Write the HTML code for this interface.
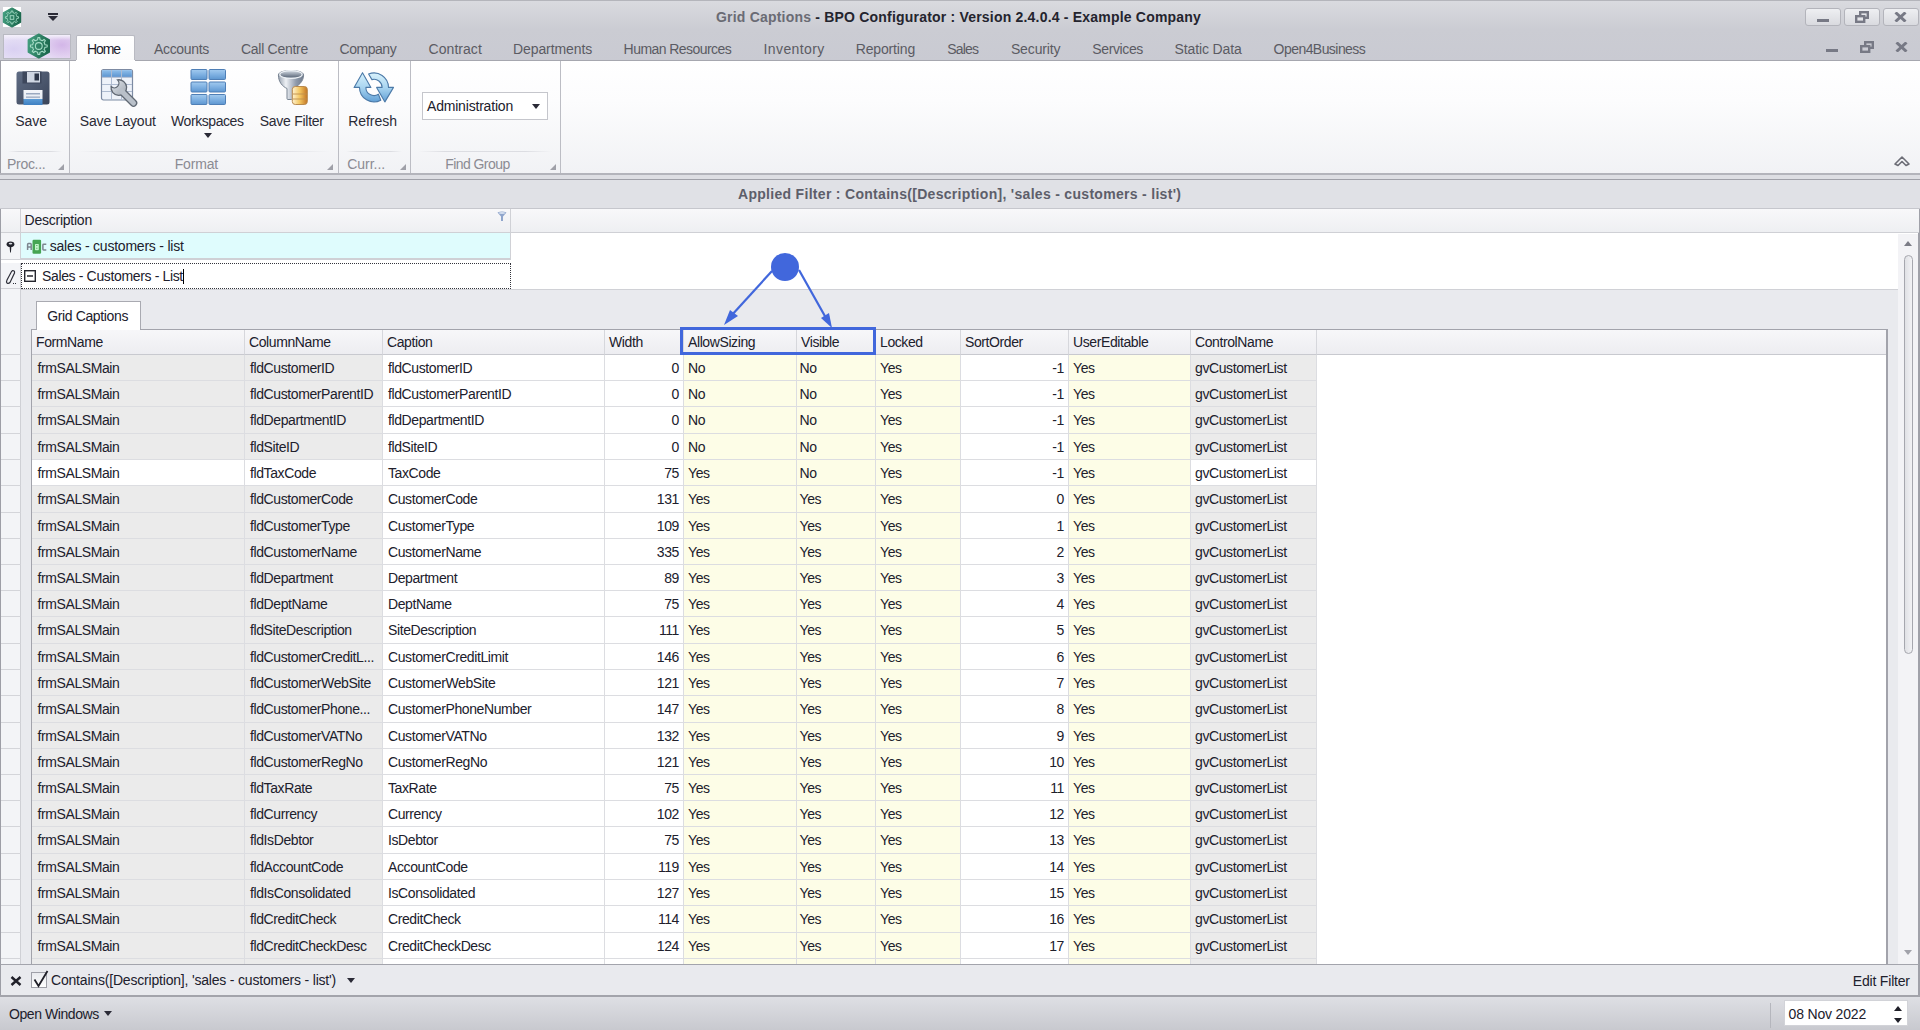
<!DOCTYPE html><html><head><meta charset="utf-8"><title>Grid Captions</title><style>
*{box-sizing:border-box;margin:0;padding:0}
html,body{width:1920px;height:1030px;overflow:hidden;background:#e9eaee;font-family:"Liberation Sans",sans-serif;font-size:13px;color:#20202c}
.a{position:absolute}
.t{position:absolute;white-space:nowrap;line-height:16px}
/* title bar */
#titlebar{position:absolute;left:0;top:0;width:1920px;height:61px;background:linear-gradient(#d9dadf 0px,#d3d4da 12px,#cbccd3 28px,#c9cad2 61px);border-top:1px solid #b4b5bb}
#tabrowline{position:absolute;left:0;top:60px;width:1920px;height:1px;background:#a6a7af}
.tab{position:absolute;top:41.5px;color:#5b5b63;white-space:nowrap;line-height:16px}
#hometab{position:absolute;left:76px;top:35px;width:59px;height:26px;background:linear-gradient(#ffffff,#fbfbfc);border:1px solid #b9bac2;border-bottom:none;border-radius:2px 2px 0 0}
/* ribbon */
#ribbon{position:absolute;left:0;top:61px;width:1920px;height:113px;background:linear-gradient(#ffffff 0px,#fcfcfd 40px,#f1f2f5 113px);border-left:1px solid #9d9ea6}
#ribbonbot{position:absolute;left:0;top:173px;width:1920px;height:2px;background:#b3b4bb}
#gap{position:absolute;left:0;top:175px;width:1920px;height:4px;background:#dddee3}
.sep{position:absolute;top:61px;width:1px;height:112px;background:#bcbdc4}
.glab{position:absolute;top:156px;color:#8b8b93;white-space:nowrap;line-height:16px}
.gline{position:absolute;top:151px;height:1px;background:linear-gradient(90deg,rgba(220,221,226,0),#dcdde2 20%,#dcdde2 80%,rgba(220,221,226,0))}
.launch{position:absolute;top:164px;width:0;height:0;border-left:6px solid transparent;border-bottom:6px solid #9fa0a8}
.rlab{position:absolute;top:114px;color:#2a2a36;white-space:nowrap;line-height:16px}
/* filter bar */
#fbar{position:absolute;left:0;top:179px;width:1920px;height:30px;background:#e0e1e6;border-top:1px solid #9fa0a8;border-bottom:1px solid #c6c7cd}
#fbar .ft{position:absolute;left:738px;top:6px;font-weight:bold;font-size:14px;color:#5d5e6a;letter-spacing:0.3px;white-space:nowrap;line-height:16px}
/* master grid */
#master{position:absolute;left:0;top:209px;width:1920px;height:756px;background:#fff;border-left:1px solid #9d9ea6;border-right:2px solid #a0a1a9}
.mh{position:absolute;top:209px;height:24px;background:linear-gradient(#f8f8fa,#eeeff2);border-bottom:1px solid #cfd0d5}
#detailbg{position:absolute;left:21px;top:290px;width:1877px;height:674px;background:#e9eaee}
/* detail grid */
#dgrid{position:absolute;left:31px;top:329px;width:1857px;height:635px;background:#fff;border:1px solid #a2a3ab;border-bottom:none;border-right:2px solid #a2a3ab}
.hc{position:absolute;top:330px;height:25px;background:linear-gradient(#f7f7f9,#ededf1);border-right:1px solid #d6d7dc;border-bottom:1px solid #c8c9cf;padding:4px 0 0 4px;white-space:nowrap;line-height:16px;color:#20202c;font-size:14px;letter-spacing:-0.4px}
.c{position:absolute;border-right:1px solid #dcdde1;border-bottom:1px solid #dcdde1;white-space:nowrap;line-height:16px;padding:5px 4px 0 4px;overflow:hidden;font-size:14px;letter-spacing:-0.4px}
.c.g{background:#ebebeb}
.c.w{background:#ffffff}
.c.y{background:#fdfde7}
.c.r{text-align:right}
.ri{position:absolute;left:1px;width:20px;background:#f3f4f7;border-bottom:1px solid #d4d5da;border-right:1px solid #cfd0d5}
#ricol{position:absolute;left:1px;top:289px;width:20px;height:675px;background:#f3f4f7;border-right:1px solid #cfd0d5}
/* filter panel + status */
#fpanel{position:absolute;left:0;top:964px;width:1920px;height:32px;background:#e9eaee;border-top:1px solid #a3a4ac;border-left:1px solid #9d9ea6;border-right:2px solid #a0a1a9}
#status{position:absolute;left:0;top:995px;width:1920px;height:35px;background:linear-gradient(#dedfe4,#c8c9cf);border-top:2px solid #a3a4ab}

</style></head><body>
<div id="titlebar"></div>
<!-- app small icon -->
<div class="a" style="left:3px;top:7px;width:18px;height:20px;background:#fff"></div>
<svg class="a" style="left:2px;top:7px" width="20" height="21" viewBox="0 0 20 21"><polygon points="10,1 18.6,5.8 18.6,15.2 10,20 1.4,15.2 1.4,5.8" fill="url(#hx)" stroke="url(#hx)" stroke-width="1.2" stroke-linejoin="round"/><path d="M14.53 8.62 L14.81 9.54 L16.56 9.78 L16.56 11.22 L14.81 11.46 L14.53 12.38 L14.07 13.22 L15.15 14.63 L14.13 15.65 L12.72 14.57 L11.88 15.03 L10.96 15.31 L10.72 17.06 L9.28 17.06 L9.04 15.31 L8.12 15.03 L7.28 14.57 L5.87 15.65 L4.85 14.63 L5.93 13.22 L5.47 12.38 L5.19 11.46 L3.44 11.22 L3.44 9.78 L5.19 9.54 L5.47 8.62 L5.93 7.78 L4.85 6.37 L5.87 5.35 L7.28 6.43 L8.12 5.97 L9.04 5.69 L9.28 3.94 L10.72 3.94 L10.96 5.69 L11.88 5.97 L12.72 6.43 L14.13 5.35 L15.15 6.37 L14.07 7.78Z" fill="none" stroke="#a6dcc6" stroke-width="0.9" stroke-linejoin="round"/><rect x="8.2" y="8.7" width="3.6" height="3.6" fill="none" stroke="#a6dcc6" stroke-width="0.9"/></svg>
<!-- quick access arrow -->
<div class="a" style="left:48px;top:13px;width:10px;height:2px;background:#2a2a36"></div>
<div class="a" style="left:48px;top:16px;width:0;height:0;border-left:5px solid transparent;border-right:5px solid transparent;border-top:5px solid #2a2a36"></div>
<!-- title -->
<div class="t" style="left:716px;top:9px;font-weight:bold;font-size:14px;letter-spacing:0.2px;color:#6a6b74">Grid Captions <span style="color:#24242e">- BPO Configurator : Version 2.4.0.4 - Example Company</span></div>
<!-- window buttons -->
<div class="a" style="left:1805px;top:8px;width:36px;height:18px;border:1px solid #b3b4bb;border-radius:3px;background:linear-gradient(#eeeff2,#d9dadf)"></div>
<div class="a" style="left:1844px;top:8px;width:36px;height:18px;border:1px solid #b3b4bb;border-radius:3px;background:linear-gradient(#eeeff2,#d9dadf)"></div>
<div class="a" style="left:1883px;top:8px;width:36px;height:18px;border:1px solid #b3b4bb;border-radius:3px;background:linear-gradient(#eeeff2,#d9dadf)"></div>
<div class="a" style="left:1817px;top:19px;width:12px;height:3px;background:#777985"></div>
<svg class="a" style="left:1855px;top:11px" width="14" height="12" viewBox="0 0 14 12"><rect x="5.2" y="1.2" width="7.6" height="5.6" fill="none" stroke="#777985" stroke-width="2.4"/><rect x="1.2" y="5.2" width="8" height="5.6" fill="#e4e5e9" stroke="#777985" stroke-width="2.4"/></svg>
<svg class="a" style="left:1894px;top:12px" width="13" height="10" viewBox="0 0 13 10"><path d="M1.5 0.5 L11.5 9.5 M11.5 0.5 L1.5 9.5" stroke="#777985" stroke-width="3"/></svg>
<!-- app button -->
<div class="a" style="left:3px;top:34px;width:68px;height:25px;border:1px solid #b9bac2;background:linear-gradient(#f4f0fb 0,rgba(244,240,251,0) 5px),radial-gradient(ellipse 22px 14px at 58px 10px,#d3b6e8,rgba(211,182,232,0)),radial-gradient(ellipse 24px 14px at 10px 14px,#d9d0f2,rgba(217,208,242,0)),linear-gradient(100deg,#e9e4f6,#e4dcf4 50%,#e6d6f2)"></div>
<svg class="a" style="left:27px;top:33px" width="24" height="26" viewBox="0 0 24 26"><defs><linearGradient id="hx" x1="0" y1="0" x2="1" y2="0.3"><stop offset="0" stop-color="#47a283"/><stop offset="1" stop-color="#1d6a4f"/></linearGradient></defs><polygon points="11.8,1.2 22.2,7 22.2,19 11.8,24.8 1.4,19 1.4,7" fill="url(#hx)" stroke="url(#hx)" stroke-width="1.6" stroke-linejoin="round"/><path d="M17.62 10.59 L17.98 11.77 L20.15 12.08 L20.15 13.92 L17.98 14.23 L17.62 15.41 L17.04 16.50 L18.36 18.25 L17.05 19.56 L15.30 18.24 L14.21 18.82 L13.03 19.18 L12.72 21.35 L10.88 21.35 L10.57 19.18 L9.39 18.82 L8.30 18.24 L6.55 19.56 L5.24 18.25 L6.56 16.50 L5.98 15.41 L5.62 14.23 L3.45 13.92 L3.45 12.08 L5.62 11.77 L5.98 10.59 L6.56 9.50 L5.24 7.75 L6.55 6.44 L8.30 7.76 L9.39 7.18 L10.57 6.82 L10.88 4.65 L12.72 4.65 L13.03 6.82 L14.21 7.18 L15.30 7.76 L17.05 6.44 L18.36 7.75 L17.04 9.50Z" fill="none" stroke="#a6dcc6" stroke-width="1.1" stroke-linejoin="round"/><circle cx="11.8" cy="13" r="3.4" fill="none" stroke="#a6dcc6" stroke-width="1.1"/></svg>
<!-- tabs -->
<div id="hometab"></div>
<div id="tabrowline"></div>
<div class="a" style="left:76px;top:60px;width:59px;height:2px;background:#fff"></div>
<div class="tab" style="left:87.00px;top:41px;font-size:14px;letter-spacing:-1.120px;color:#20202c">Home</div>
<div class="tab" style="left:154.00px;top:41px;font-size:14px;letter-spacing:-0.342px">Accounts</div>
<div class="tab" style="left:241.00px;top:41px;font-size:14px;letter-spacing:-0.283px">Call Centre</div>
<div class="tab" style="left:339.50px;top:41px;font-size:14px;letter-spacing:-0.454px">Company</div>
<div class="tab" style="left:428.60px;top:41px;font-size:14px;letter-spacing:0.040px">Contract</div>
<div class="tab" style="left:513.00px;top:41px;font-size:14px;letter-spacing:-0.096px">Departments</div>
<div class="tab" style="left:623.60px;top:41px;font-size:14px;letter-spacing:-0.553px">Human Resources</div>
<div class="tab" style="left:763.60px;top:41px;font-size:14px;letter-spacing:0.376px">Inventory</div>
<div class="tab" style="left:855.70px;top:41px;font-size:14px;letter-spacing:-0.150px">Reporting</div>
<div class="tab" style="left:947.30px;top:41px;font-size:14px;letter-spacing:-0.858px">Sales</div>
<div class="tab" style="left:1010.90px;top:41px;font-size:14px;letter-spacing:-0.125px">Security</div>
<div class="tab" style="left:1092.30px;top:41px;font-size:14px;letter-spacing:-0.384px">Services</div>
<div class="tab" style="left:1174.60px;top:41px;font-size:14px;letter-spacing:-0.128px">Static Data</div>
<div class="tab" style="left:1273.60px;top:41px;font-size:14px;letter-spacing:-0.554px">Open4Business</div>
<!-- mdi buttons -->
<div class="a" style="left:1826px;top:49px;width:12px;height:3px;background:#777985"></div>
<svg class="a" style="left:1860px;top:41px" width="14" height="12" viewBox="0 0 14 12"><rect x="5.2" y="1.2" width="7.6" height="5.6" fill="none" stroke="#777985" stroke-width="2.4"/><rect x="1.2" y="5.2" width="8" height="5.6" fill="#cbccd4" stroke="#777985" stroke-width="2.4"/></svg>
<svg class="a" style="left:1895px;top:42px" width="13" height="10" viewBox="0 0 13 10"><path d="M1.5 0.5 L11.5 9.5 M11.5 0.5 L1.5 9.5" stroke="#777985" stroke-width="3"/></svg>
<!-- ribbon -->
<div id="ribbon"></div>
<div id="ribbonbot"></div>
<div id="gap"></div>
<div class="sep" style="left:69px"></div>
<div class="sep" style="left:338px"></div>
<div class="sep" style="left:410px"></div>
<div class="sep" style="left:560px"></div>
<div class="gline" style="left:8px;width:54px"></div>
<div class="gline" style="left:78px;width:252px"></div>
<div class="gline" style="left:346px;width:56px"></div>
<div class="gline" style="left:418px;width:134px"></div>
<div class="glab" style="left:7.00px;top:156px;font-size:14px;letter-spacing:-0.295px">Proc...</div>
<div class="glab" style="left:174.75px;top:156px;font-size:14px;letter-spacing:-0.179px">Format</div>
<div class="glab" style="left:347.25px;top:156px;font-size:14px;letter-spacing:-0.029px">Curr...</div>
<div class="glab" style="left:445.25px;top:156px;font-size:14px;letter-spacing:-0.566px">Find Group</div>
<div class="launch" style="left:58px"></div>
<div class="launch" style="left:327px"></div>
<div class="launch" style="left:400px"></div>
<div class="launch" style="left:550px"></div>
<!-- Save floppy -->
<svg class="a" style="left:16px;top:71px" width="34" height="34" viewBox="0 0 34 34">
<defs><linearGradient id="fl" x1="0" y1="0" x2="1" y2="1"><stop offset="0" stop-color="#5f6c84"/><stop offset="1" stop-color="#3b455a"/></linearGradient>
<linearGradient id="lb" x1="0" y1="0" x2="0" y2="1"><stop offset="0" stop-color="#f4f6fa"/><stop offset="0.6" stop-color="#e6ebf3"/><stop offset="0.62" stop-color="#5b9bd6"/><stop offset="1" stop-color="#3f80c2"/></linearGradient></defs>
<rect x="0.5" y="0.5" width="33" height="33" rx="2.5" fill="url(#fl)"/>
<rect x="6.5" y="0.5" width="19" height="12" fill="#3d475c"/>
<rect x="11" y="1" width="13" height="10.5" fill="#cfd6e2"/>
<rect x="18.5" y="2.5" width="4.5" height="7" fill="#2e3648"/>
<rect x="7.5" y="19" width="19" height="15" fill="url(#lb)"/>
<rect x="10" y="22" width="14" height="1.5" fill="#9ba9c0"/><rect x="10" y="25.5" width="14" height="1.3" fill="#9ba9c0"/>
</svg>
<div class="rlab" style="left:15.25px;top:113px;font-size:14px;letter-spacing:-0.074px">Save</div>
<!-- Save Layout -->
<svg class="a" style="left:100px;top:68px" width="40" height="40" viewBox="0 0 40 40">
<defs><linearGradient id="wr" x1="0" y1="0" x2="1" y2="1"><stop offset="0" stop-color="#e4e8ed"/><stop offset="1" stop-color="#9ea6b1"/></linearGradient>
<linearGradient id="th" x1="0" y1="0" x2="0" y2="1"><stop offset="0" stop-color="#8fbfeb"/><stop offset="1" stop-color="#5a93cf"/></linearGradient></defs>
<rect x="1.5" y="1.5" width="31" height="30.5" rx="2" fill="#eef2f9" stroke="#7d8ba3" stroke-width="1.2"/>
<rect x="2.1" y="2.1" width="29.8" height="7" fill="url(#th)"/>
<path d="M2 9.3H32M2 16.5H32M2 23.5H32M11.5 2V31.5M21.5 2V31.5" stroke="#aebbd0" stroke-width="1"/>
<path d="M21.5 23 L33.5 35" stroke="#606873" stroke-width="7.6" stroke-linecap="round"/>
<path d="M17.5 11.9 A7.8 7.8 0 1 1 11.1 18.5 A4.3 4.3 0 0 0 17.5 11.9 Z" fill="url(#wr)" stroke="#606873" stroke-width="1.3"/>
<path d="M21.5 23 L33.5 35" stroke="#b9c0c9" stroke-width="5" stroke-linecap="round"/>
</svg>
<div class="rlab" style="left:79.80px;top:113px;font-size:14px;letter-spacing:-0.164px">Save Layout</div>
<!-- Workspaces -->
<svg class="a" style="left:190px;top:68px" width="38" height="38" viewBox="0 0 38 38">
<defs><linearGradient id="wb" x1="0" y1="0" x2="0" y2="1"><stop offset="0" stop-color="#a3cbef"/><stop offset="0.5" stop-color="#7fb1e2"/><stop offset="1" stop-color="#5d96d0"/></linearGradient></defs>
<g fill="url(#wb)" stroke="#4f7fb6" stroke-width="1">
<rect x="1" y="1.5" width="16" height="10" rx="1"/><rect x="19" y="1.5" width="16.5" height="10" rx="1"/>
<rect x="1" y="14" width="16" height="10" rx="1"/><rect x="19" y="14" width="16.5" height="10" rx="1"/>
<rect x="1" y="26.5" width="16" height="10" rx="1"/><rect x="19" y="26.5" width="16.5" height="10" rx="1"/>
</g></svg>
<div class="rlab" style="left:171.00px;top:113px;font-size:14px;letter-spacing:-0.426px">Workspaces</div>
<div class="a" style="left:204px;top:133px;width:0;height:0;border-left:4px solid transparent;border-right:4px solid transparent;border-top:5px solid #2a2a36"></div>
<!-- Save Filter -->
<svg class="a" style="left:276px;top:68px" width="34" height="40" viewBox="0 0 34 40">
<defs><linearGradient id="fn" x1="0" y1="0" x2="1" y2="0"><stop offset="0" stop-color="#9aa4b1"/><stop offset="0.3" stop-color="#eef1f5"/><stop offset="0.7" stop-color="#8e9aab"/><stop offset="1" stop-color="#6f7b8c"/></linearGradient>
<linearGradient id="fi" x1="0" y1="0" x2="0" y2="1"><stop offset="0" stop-color="#d5dce4"/><stop offset="0.75" stop-color="#6d7989"/><stop offset="1" stop-color="#8a96a5"/></linearGradient>
<linearGradient id="db" x1="0" y1="0" x2="1" y2="0"><stop offset="0" stop-color="#fff3d2"/><stop offset="0.5" stop-color="#f3c660"/><stop offset="1" stop-color="#c27424"/></linearGradient></defs>
<path d="M2.4 7 C2.4 1, 27.6 1, 27.6 7 C27.6 14, 21.5 18.5, 16.5 20.5 V30.5 Q16.5 31.5 15.5 31.5 H12 Q11 31.5 11 30.5 V20.5 C6.5 18.5, 2.4 14, 2.4 7 Z" fill="url(#fn)" stroke="#7a8593" stroke-width="1"/>
<ellipse cx="15" cy="6.5" rx="11.2" ry="3.9" fill="url(#fi)" stroke="#eef2f6" stroke-width="1.2"/>
<rect x="16.3" y="18.5" width="15" height="18" rx="3" fill="url(#db)" stroke="#b98a4d" stroke-width="1"/>
<path d="M17 26H30.8M17 31H30.8" stroke="#c0904f" stroke-width="0.9"/>
</svg>
<div class="rlab" style="left:259.75px;top:113px;font-size:14px;letter-spacing:-0.272px">Save Filter</div>
<!-- Refresh -->
<svg class="a" style="left:350px;top:69px" width="46" height="36" viewBox="350 69 46 36">
<defs><linearGradient id="rf" x1="0" y1="0" x2="0" y2="1"><stop offset="0" stop-color="#d8f2fc"/><stop offset="0.5" stop-color="#a9d5f0"/><stop offset="1" stop-color="#62a0d6"/></linearGradient></defs>
<path d="M354.1 87.4 L362.5 72.7 L370.9 87.4 L365.9 87.4 A8.1 8.1 0 0 0 378.4 94.2 L380.8 100.2 A14.5 14.5 0 0 1 359.5 87.4 Z" fill="url(#rf)" stroke="#4c7aa8" stroke-width="1.1" stroke-linejoin="round"/>
<path d="M368.6 74 A14.5 14.5 0 0 1 388.5 87.4 L393.5 87.4 L384.9 101.9 L376.6 87.4 L382.1 87.4 A8.1 8.1 0 0 0 371.9 79.6 Z" fill="url(#rf)" stroke="#4c7aa8" stroke-width="1.1" stroke-linejoin="round"/>
</svg>
<div class="rlab" style="left:348.25px;top:113px;font-size:14px;letter-spacing:-0.055px">Refresh</div>
<!-- Administration combo -->
<div class="a" style="left:422px;top:92px;width:126px;height:28px;background:#fff;border:1px solid #c5c6cc"></div>
<div class="t" style="left:427.00px;top:98px;font-size:14px;letter-spacing:-0.193px">Administration</div>
<div class="a" style="left:532px;top:104px;width:0;height:0;border-left:4px solid transparent;border-right:4px solid transparent;border-top:5px solid #2a2a36"></div>
<!-- collapse caret -->
<svg class="a" style="left:1893px;top:154px" width="18" height="13" viewBox="0 0 18 13"><path d="M2 10 L9 3 L16 10 L13 11.5 L9 7.5 L5 11.5Z" fill="none" stroke="#6d6e77" stroke-width="1.6" stroke-linejoin="round"/></svg>
<!-- filter bar -->
<div id="fbar"><div class="ft">Applied Filter : Contains([Description], 'sales - customers - list')</div></div>
<!-- master grid -->
<div id="master"></div>
<div class="mh" style="left:1px;width:20px;border-right:1px solid #d0d1d6"></div>
<div class="mh" style="left:21px;width:490px;border-right:1px solid #d0d1d6"></div>
<div class="mh" style="left:511px;width:1408px"></div>
<div class="t" style="left:24.50px;top:211.5px;font-size:14px;letter-spacing:-0.233px">Description</div>
<svg class="a" style="left:497px;top:211px" width="10" height="11" viewBox="0 0 10 11"><path d="M0.5 1.5 Q5 -0.5 9.5 1.5 L6 5.5 V10 H4 V5.5Z" fill="#8fa5cc"/><ellipse cx="5" cy="2" rx="3.2" ry="1" fill="#d4deef"/></svg>
<!-- filter row -->
<div class="a" style="left:1px;top:233px;width:20px;height:27px;background:#f3f4f7;border-right:1px solid #d0d1d6;border-bottom:1px solid #d0d1d6"></div>
<div class="a" style="left:21px;top:233px;width:490px;height:27px;background:#dffcfd;border-right:1px solid #d0d1d6;border-bottom:2px solid #cfd0d5"></div>
<svg class="a" style="left:6px;top:241px" width="9" height="12" viewBox="0 0 9 12"><ellipse cx="4.5" cy="3.3" rx="3.9" ry="2.8" fill="#22232c"/><ellipse cx="4.5" cy="2.6" rx="1.8" ry="0.9" fill="#d9dbe0"/><path d="M3.6 5.5 H5.4 L4.9 11.5 H4.1 Z" fill="#22232c"/></svg>
<svg class="a" style="left:26px;top:239px" width="22" height="16" viewBox="0 0 22 16">
<path d="M1.6 11 V5.5 Q1.6 4.6 2.5 4.6 H4.3 Q5.2 4.6 5.2 5.5 V11 M1.6 8 H5.2" fill="none" stroke="#7d858f" stroke-width="1.5"/>
<rect x="6.5" y="0.8" width="8.6" height="14" rx="1.2" fill="#45a553"/>
<rect x="9" y="5" width="3.8" height="6.2" rx="0.6" fill="#c4f5cb"/>
<path d="M10 6.5 H11.5 M10 9.3 H11.5" stroke="#6bb679" stroke-width="1.1"/>
<path d="M20.3 5.2 H17.6 Q16.9 5.2 16.9 5.9 V10.2 Q16.9 10.9 17.6 10.9 H20.3" fill="none" stroke="#7d858f" stroke-width="1.5"/>
</svg>
<div class="t" style="left:49.70px;top:238px;font-size:14px;letter-spacing:-0.220px">sales - customers - list</div>
<!-- edit row -->
<div class="a" style="left:1px;top:263px;width:20px;height:26px;background:#f3f4f7;border-right:1px solid #d0d1d6;border-bottom:1px solid #d0d1d6"></div>
<div class="a" style="left:21px;top:263px;width:490px;height:26px;background:#fff;border:1px dotted #33343c"></div>
<svg class="a" style="left:5px;top:269px" width="12" height="16" viewBox="0 0 12 16"><path d="M7.5 1.5 Q10 1.5 9.5 4 L5 13.5 Q3.5 15 2 14 Q1 13 2 11 L6.5 2.5 Z" fill="none" stroke="#2d2e38" stroke-width="1.2"/><path d="M8 14.5h1M10 14.5h1" stroke="#2d2e38"/></svg>
<svg class="a" style="left:23px;top:269px" width="14" height="14" viewBox="0 0 14 14"><rect x="1.7" y="1.7" width="10.6" height="10.6" fill="#fff" stroke="#25262e" stroke-width="1.4"/><path d="M4 7H10" stroke="#25262e" stroke-width="1.5"/></svg>
<div class="t" style="left:42.00px;top:268px;font-size:14px;letter-spacing:-0.355px">Sales - Customers - List</div>
<div class="a" style="left:183px;top:269px;width:1px;height:15px;background:#000"></div>
<!-- detail area -->
<div id="detailbg"></div>
<div class="a" style="left:511px;top:289px;width:1387px;height:1px;background:#d0d1d6"></div>
<div class="a" style="left:21px;top:289px;width:490px;height:1px;background:#d0d1d6"></div>
<!-- scrollbar -->
<div class="a" style="left:1898px;top:234px;width:20px;height:730px;background:#f3f3f6"></div>
<div class="a" style="left:1904px;top:241px;width:0;height:0;border-left:4px solid transparent;border-right:4px solid transparent;border-bottom:5px solid #7b7c86"></div>
<div class="a" style="left:1904px;top:950px;width:0;height:0;border-left:4px solid transparent;border-right:4px solid transparent;border-top:5px solid #a1a2aa"></div>
<div class="a" style="left:1904px;top:255px;width:9px;height:399px;border:1px solid #a6a7ae;border-radius:5px;background:linear-gradient(90deg,#e0e1e5,#f2f2f5)"></div>
<!-- detail tab -->
<div class="a" style="left:36px;top:301px;width:105px;height:30px;background:#fff;border:1px solid #a9aab1;border-bottom:none"></div>
<div class="t" style="left:47.20px;top:308px;font-size:14px;letter-spacing:-0.366px">Grid Captions</div>
<!-- detail grid -->
<div id="ricol"></div>
<div class="a" style="left:1px;top:354px;width:20px;height:1px;background:#d4d5da"></div>
<div id="dgrid"></div>
<div class="a" style="left:1316px;top:355px;width:570px;height:609px;background:#fff"></div>
<div class="a" style="left:37px;top:329px;width:103px;height:2px;background:#fff"></div>

<div class="hc" style="left:32px;width:213px">FormName</div>
<div class="hc" style="left:245px;width:138px">ColumnName</div>
<div class="hc" style="left:383px;width:222px">Caption</div>
<div class="hc" style="left:605px;width:79px">Width</div>
<div class="hc" style="left:684px;width:113px">AllowSizing</div>
<div class="hc" style="left:797px;width:79px">Visible</div>
<div class="hc" style="left:876px;width:85px">Locked</div>
<div class="hc" style="left:961px;width:108px">SortOrder</div>
<div class="hc" style="left:1069px;width:122px">UserEditable</div>
<div class="hc" style="left:1191px;width:126px">ControlName</div>
<div class="hc" style="left:1317px;width:569px;border-right:none"></div>
<div class="c g l" style="left:32px;top:355px;width:213px;height:26px;padding-left:5.5px"><span>frmSALSMain</span></div>
<div class="c g l" style="left:245px;top:355px;width:138px;height:26px;padding-left:5px"><span>fldCustomerID</span></div>
<div class="c w l" style="left:383px;top:355px;width:222px;height:26px;padding-left:5px"><span>fldCustomerID</span></div>
<div class="c w r" style="left:605px;top:355px;width:79px;height:26px;padding-left:4px"><span>0</span></div>
<div class="c y l" style="left:684px;top:355px;width:113px;height:26px;padding-left:4px"><span>No</span></div>
<div class="c y l" style="left:797px;top:355px;width:79px;height:26px;padding-left:2.5px"><span>No</span></div>
<div class="c y l" style="left:876px;top:355px;width:85px;height:26px;padding-left:4px"><span>Yes</span></div>
<div class="c w r" style="left:961px;top:355px;width:108px;height:26px;padding-left:4px"><span>-1</span></div>
<div class="c y l" style="left:1069px;top:355px;width:122px;height:26px;padding-left:4px"><span>Yes</span></div>
<div class="c g l" style="left:1191px;top:355px;width:126px;height:26px;padding-left:4px"><span>gvCustomerList</span></div>
<div class="ri" style="top:355px;height:26px"></div>
<div class="c g l" style="left:32px;top:381px;width:213px;height:26px;padding-left:5.5px"><span>frmSALSMain</span></div>
<div class="c g l" style="left:245px;top:381px;width:138px;height:26px;padding-left:5px"><span>fldCustomerParentID</span></div>
<div class="c w l" style="left:383px;top:381px;width:222px;height:26px;padding-left:5px"><span>fldCustomerParentID</span></div>
<div class="c w r" style="left:605px;top:381px;width:79px;height:26px;padding-left:4px"><span>0</span></div>
<div class="c y l" style="left:684px;top:381px;width:113px;height:26px;padding-left:4px"><span>No</span></div>
<div class="c y l" style="left:797px;top:381px;width:79px;height:26px;padding-left:2.5px"><span>No</span></div>
<div class="c y l" style="left:876px;top:381px;width:85px;height:26px;padding-left:4px"><span>Yes</span></div>
<div class="c w r" style="left:961px;top:381px;width:108px;height:26px;padding-left:4px"><span>-1</span></div>
<div class="c y l" style="left:1069px;top:381px;width:122px;height:26px;padding-left:4px"><span>Yes</span></div>
<div class="c g l" style="left:1191px;top:381px;width:126px;height:26px;padding-left:4px"><span>gvCustomerList</span></div>
<div class="ri" style="top:381px;height:26px"></div>
<div class="c g l" style="left:32px;top:407px;width:213px;height:27px;padding-left:5.5px"><span>frmSALSMain</span></div>
<div class="c g l" style="left:245px;top:407px;width:138px;height:27px;padding-left:5px"><span>fldDepartmentID</span></div>
<div class="c w l" style="left:383px;top:407px;width:222px;height:27px;padding-left:5px"><span>fldDepartmentID</span></div>
<div class="c w r" style="left:605px;top:407px;width:79px;height:27px;padding-left:4px"><span>0</span></div>
<div class="c y l" style="left:684px;top:407px;width:113px;height:27px;padding-left:4px"><span>No</span></div>
<div class="c y l" style="left:797px;top:407px;width:79px;height:27px;padding-left:2.5px"><span>No</span></div>
<div class="c y l" style="left:876px;top:407px;width:85px;height:27px;padding-left:4px"><span>Yes</span></div>
<div class="c w r" style="left:961px;top:407px;width:108px;height:27px;padding-left:4px"><span>-1</span></div>
<div class="c y l" style="left:1069px;top:407px;width:122px;height:27px;padding-left:4px"><span>Yes</span></div>
<div class="c g l" style="left:1191px;top:407px;width:126px;height:27px;padding-left:4px"><span>gvCustomerList</span></div>
<div class="ri" style="top:407px;height:27px"></div>
<div class="c g l" style="left:32px;top:434px;width:213px;height:26px;padding-left:5.5px"><span>frmSALSMain</span></div>
<div class="c g l" style="left:245px;top:434px;width:138px;height:26px;padding-left:5px"><span>fldSiteID</span></div>
<div class="c w l" style="left:383px;top:434px;width:222px;height:26px;padding-left:5px"><span>fldSiteID</span></div>
<div class="c w r" style="left:605px;top:434px;width:79px;height:26px;padding-left:4px"><span>0</span></div>
<div class="c y l" style="left:684px;top:434px;width:113px;height:26px;padding-left:4px"><span>No</span></div>
<div class="c y l" style="left:797px;top:434px;width:79px;height:26px;padding-left:2.5px"><span>No</span></div>
<div class="c y l" style="left:876px;top:434px;width:85px;height:26px;padding-left:4px"><span>Yes</span></div>
<div class="c w r" style="left:961px;top:434px;width:108px;height:26px;padding-left:4px"><span>-1</span></div>
<div class="c y l" style="left:1069px;top:434px;width:122px;height:26px;padding-left:4px"><span>Yes</span></div>
<div class="c g l" style="left:1191px;top:434px;width:126px;height:26px;padding-left:4px"><span>gvCustomerList</span></div>
<div class="ri" style="top:434px;height:26px"></div>
<div class="c w l" style="left:32px;top:460px;width:213px;height:26px;padding-left:5.5px"><span>frmSALSMain</span></div>
<div class="c w l" style="left:245px;top:460px;width:138px;height:26px;padding-left:5px"><span>fldTaxCode</span></div>
<div class="c w l" style="left:383px;top:460px;width:222px;height:26px;padding-left:5px"><span>TaxCode</span></div>
<div class="c w r" style="left:605px;top:460px;width:79px;height:26px;padding-left:4px"><span>75</span></div>
<div class="c y l" style="left:684px;top:460px;width:113px;height:26px;padding-left:4px"><span>Yes</span></div>
<div class="c y l" style="left:797px;top:460px;width:79px;height:26px;padding-left:2.5px"><span>No</span></div>
<div class="c y l" style="left:876px;top:460px;width:85px;height:26px;padding-left:4px"><span>Yes</span></div>
<div class="c w r" style="left:961px;top:460px;width:108px;height:26px;padding-left:4px"><span>-1</span></div>
<div class="c y l" style="left:1069px;top:460px;width:122px;height:26px;padding-left:4px"><span>Yes</span></div>
<div class="c w l" style="left:1191px;top:460px;width:126px;height:26px;padding-left:4px"><span>gvCustomerList</span></div>
<div class="ri" style="top:460px;height:26px"></div>
<div class="c g l" style="left:32px;top:486px;width:213px;height:27px;padding-left:5.5px"><span>frmSALSMain</span></div>
<div class="c g l" style="left:245px;top:486px;width:138px;height:27px;padding-left:5px"><span>fldCustomerCode</span></div>
<div class="c w l" style="left:383px;top:486px;width:222px;height:27px;padding-left:5px"><span>CustomerCode</span></div>
<div class="c w r" style="left:605px;top:486px;width:79px;height:27px;padding-left:4px"><span>131</span></div>
<div class="c y l" style="left:684px;top:486px;width:113px;height:27px;padding-left:4px"><span>Yes</span></div>
<div class="c y l" style="left:797px;top:486px;width:79px;height:27px;padding-left:2.5px"><span>Yes</span></div>
<div class="c y l" style="left:876px;top:486px;width:85px;height:27px;padding-left:4px"><span>Yes</span></div>
<div class="c w r" style="left:961px;top:486px;width:108px;height:27px;padding-left:4px"><span>0</span></div>
<div class="c y l" style="left:1069px;top:486px;width:122px;height:27px;padding-left:4px"><span>Yes</span></div>
<div class="c g l" style="left:1191px;top:486px;width:126px;height:27px;padding-left:4px"><span>gvCustomerList</span></div>
<div class="ri" style="top:486px;height:27px"></div>
<div class="c g l" style="left:32px;top:513px;width:213px;height:26px;padding-left:5.5px"><span>frmSALSMain</span></div>
<div class="c g l" style="left:245px;top:513px;width:138px;height:26px;padding-left:5px"><span>fldCustomerType</span></div>
<div class="c w l" style="left:383px;top:513px;width:222px;height:26px;padding-left:5px"><span>CustomerType</span></div>
<div class="c w r" style="left:605px;top:513px;width:79px;height:26px;padding-left:4px"><span>109</span></div>
<div class="c y l" style="left:684px;top:513px;width:113px;height:26px;padding-left:4px"><span>Yes</span></div>
<div class="c y l" style="left:797px;top:513px;width:79px;height:26px;padding-left:2.5px"><span>Yes</span></div>
<div class="c y l" style="left:876px;top:513px;width:85px;height:26px;padding-left:4px"><span>Yes</span></div>
<div class="c w r" style="left:961px;top:513px;width:108px;height:26px;padding-left:4px"><span>1</span></div>
<div class="c y l" style="left:1069px;top:513px;width:122px;height:26px;padding-left:4px"><span>Yes</span></div>
<div class="c g l" style="left:1191px;top:513px;width:126px;height:26px;padding-left:4px"><span>gvCustomerList</span></div>
<div class="ri" style="top:513px;height:26px"></div>
<div class="c g l" style="left:32px;top:539px;width:213px;height:26px;padding-left:5.5px"><span>frmSALSMain</span></div>
<div class="c g l" style="left:245px;top:539px;width:138px;height:26px;padding-left:5px"><span>fldCustomerName</span></div>
<div class="c w l" style="left:383px;top:539px;width:222px;height:26px;padding-left:5px"><span>CustomerName</span></div>
<div class="c w r" style="left:605px;top:539px;width:79px;height:26px;padding-left:4px"><span>335</span></div>
<div class="c y l" style="left:684px;top:539px;width:113px;height:26px;padding-left:4px"><span>Yes</span></div>
<div class="c y l" style="left:797px;top:539px;width:79px;height:26px;padding-left:2.5px"><span>Yes</span></div>
<div class="c y l" style="left:876px;top:539px;width:85px;height:26px;padding-left:4px"><span>Yes</span></div>
<div class="c w r" style="left:961px;top:539px;width:108px;height:26px;padding-left:4px"><span>2</span></div>
<div class="c y l" style="left:1069px;top:539px;width:122px;height:26px;padding-left:4px"><span>Yes</span></div>
<div class="c g l" style="left:1191px;top:539px;width:126px;height:26px;padding-left:4px"><span>gvCustomerList</span></div>
<div class="ri" style="top:539px;height:26px"></div>
<div class="c g l" style="left:32px;top:565px;width:213px;height:26px;padding-left:5.5px"><span>frmSALSMain</span></div>
<div class="c g l" style="left:245px;top:565px;width:138px;height:26px;padding-left:5px"><span>fldDepartment</span></div>
<div class="c w l" style="left:383px;top:565px;width:222px;height:26px;padding-left:5px"><span>Department</span></div>
<div class="c w r" style="left:605px;top:565px;width:79px;height:26px;padding-left:4px"><span>89</span></div>
<div class="c y l" style="left:684px;top:565px;width:113px;height:26px;padding-left:4px"><span>Yes</span></div>
<div class="c y l" style="left:797px;top:565px;width:79px;height:26px;padding-left:2.5px"><span>Yes</span></div>
<div class="c y l" style="left:876px;top:565px;width:85px;height:26px;padding-left:4px"><span>Yes</span></div>
<div class="c w r" style="left:961px;top:565px;width:108px;height:26px;padding-left:4px"><span>3</span></div>
<div class="c y l" style="left:1069px;top:565px;width:122px;height:26px;padding-left:4px"><span>Yes</span></div>
<div class="c g l" style="left:1191px;top:565px;width:126px;height:26px;padding-left:4px"><span>gvCustomerList</span></div>
<div class="ri" style="top:565px;height:26px"></div>
<div class="c g l" style="left:32px;top:591px;width:213px;height:26px;padding-left:5.5px"><span>frmSALSMain</span></div>
<div class="c g l" style="left:245px;top:591px;width:138px;height:26px;padding-left:5px"><span>fldDeptName</span></div>
<div class="c w l" style="left:383px;top:591px;width:222px;height:26px;padding-left:5px"><span>DeptName</span></div>
<div class="c w r" style="left:605px;top:591px;width:79px;height:26px;padding-left:4px"><span>75</span></div>
<div class="c y l" style="left:684px;top:591px;width:113px;height:26px;padding-left:4px"><span>Yes</span></div>
<div class="c y l" style="left:797px;top:591px;width:79px;height:26px;padding-left:2.5px"><span>Yes</span></div>
<div class="c y l" style="left:876px;top:591px;width:85px;height:26px;padding-left:4px"><span>Yes</span></div>
<div class="c w r" style="left:961px;top:591px;width:108px;height:26px;padding-left:4px"><span>4</span></div>
<div class="c y l" style="left:1069px;top:591px;width:122px;height:26px;padding-left:4px"><span>Yes</span></div>
<div class="c g l" style="left:1191px;top:591px;width:126px;height:26px;padding-left:4px"><span>gvCustomerList</span></div>
<div class="ri" style="top:591px;height:26px"></div>
<div class="c g l" style="left:32px;top:617px;width:213px;height:27px;padding-left:5.5px"><span>frmSALSMain</span></div>
<div class="c g l" style="left:245px;top:617px;width:138px;height:27px;padding-left:5px"><span>fldSiteDescription</span></div>
<div class="c w l" style="left:383px;top:617px;width:222px;height:27px;padding-left:5px"><span>SiteDescription</span></div>
<div class="c w r" style="left:605px;top:617px;width:79px;height:27px;padding-left:4px"><span>111</span></div>
<div class="c y l" style="left:684px;top:617px;width:113px;height:27px;padding-left:4px"><span>Yes</span></div>
<div class="c y l" style="left:797px;top:617px;width:79px;height:27px;padding-left:2.5px"><span>Yes</span></div>
<div class="c y l" style="left:876px;top:617px;width:85px;height:27px;padding-left:4px"><span>Yes</span></div>
<div class="c w r" style="left:961px;top:617px;width:108px;height:27px;padding-left:4px"><span>5</span></div>
<div class="c y l" style="left:1069px;top:617px;width:122px;height:27px;padding-left:4px"><span>Yes</span></div>
<div class="c g l" style="left:1191px;top:617px;width:126px;height:27px;padding-left:4px"><span>gvCustomerList</span></div>
<div class="ri" style="top:617px;height:27px"></div>
<div class="c g l" style="left:32px;top:644px;width:213px;height:26px;padding-left:5.5px"><span>frmSALSMain</span></div>
<div class="c g l" style="left:245px;top:644px;width:138px;height:26px;padding-left:5px"><span>fldCustomerCreditL...</span></div>
<div class="c w l" style="left:383px;top:644px;width:222px;height:26px;padding-left:5px"><span>CustomerCreditLimit</span></div>
<div class="c w r" style="left:605px;top:644px;width:79px;height:26px;padding-left:4px"><span>146</span></div>
<div class="c y l" style="left:684px;top:644px;width:113px;height:26px;padding-left:4px"><span>Yes</span></div>
<div class="c y l" style="left:797px;top:644px;width:79px;height:26px;padding-left:2.5px"><span>Yes</span></div>
<div class="c y l" style="left:876px;top:644px;width:85px;height:26px;padding-left:4px"><span>Yes</span></div>
<div class="c w r" style="left:961px;top:644px;width:108px;height:26px;padding-left:4px"><span>6</span></div>
<div class="c y l" style="left:1069px;top:644px;width:122px;height:26px;padding-left:4px"><span>Yes</span></div>
<div class="c g l" style="left:1191px;top:644px;width:126px;height:26px;padding-left:4px"><span>gvCustomerList</span></div>
<div class="ri" style="top:644px;height:26px"></div>
<div class="c g l" style="left:32px;top:670px;width:213px;height:26px;padding-left:5.5px"><span>frmSALSMain</span></div>
<div class="c g l" style="left:245px;top:670px;width:138px;height:26px;padding-left:5px"><span>fldCustomerWebSite</span></div>
<div class="c w l" style="left:383px;top:670px;width:222px;height:26px;padding-left:5px"><span>CustomerWebSite</span></div>
<div class="c w r" style="left:605px;top:670px;width:79px;height:26px;padding-left:4px"><span>121</span></div>
<div class="c y l" style="left:684px;top:670px;width:113px;height:26px;padding-left:4px"><span>Yes</span></div>
<div class="c y l" style="left:797px;top:670px;width:79px;height:26px;padding-left:2.5px"><span>Yes</span></div>
<div class="c y l" style="left:876px;top:670px;width:85px;height:26px;padding-left:4px"><span>Yes</span></div>
<div class="c w r" style="left:961px;top:670px;width:108px;height:26px;padding-left:4px"><span>7</span></div>
<div class="c y l" style="left:1069px;top:670px;width:122px;height:26px;padding-left:4px"><span>Yes</span></div>
<div class="c g l" style="left:1191px;top:670px;width:126px;height:26px;padding-left:4px"><span>gvCustomerList</span></div>
<div class="ri" style="top:670px;height:26px"></div>
<div class="c g l" style="left:32px;top:696px;width:213px;height:27px;padding-left:5.5px"><span>frmSALSMain</span></div>
<div class="c g l" style="left:245px;top:696px;width:138px;height:27px;padding-left:5px"><span>fldCustomerPhone...</span></div>
<div class="c w l" style="left:383px;top:696px;width:222px;height:27px;padding-left:5px"><span>CustomerPhoneNumber</span></div>
<div class="c w r" style="left:605px;top:696px;width:79px;height:27px;padding-left:4px"><span>147</span></div>
<div class="c y l" style="left:684px;top:696px;width:113px;height:27px;padding-left:4px"><span>Yes</span></div>
<div class="c y l" style="left:797px;top:696px;width:79px;height:27px;padding-left:2.5px"><span>Yes</span></div>
<div class="c y l" style="left:876px;top:696px;width:85px;height:27px;padding-left:4px"><span>Yes</span></div>
<div class="c w r" style="left:961px;top:696px;width:108px;height:27px;padding-left:4px"><span>8</span></div>
<div class="c y l" style="left:1069px;top:696px;width:122px;height:27px;padding-left:4px"><span>Yes</span></div>
<div class="c g l" style="left:1191px;top:696px;width:126px;height:27px;padding-left:4px"><span>gvCustomerList</span></div>
<div class="ri" style="top:696px;height:27px"></div>
<div class="c g l" style="left:32px;top:723px;width:213px;height:26px;padding-left:5.5px"><span>frmSALSMain</span></div>
<div class="c g l" style="left:245px;top:723px;width:138px;height:26px;padding-left:5px"><span>fldCustomerVATNo</span></div>
<div class="c w l" style="left:383px;top:723px;width:222px;height:26px;padding-left:5px"><span>CustomerVATNo</span></div>
<div class="c w r" style="left:605px;top:723px;width:79px;height:26px;padding-left:4px"><span>132</span></div>
<div class="c y l" style="left:684px;top:723px;width:113px;height:26px;padding-left:4px"><span>Yes</span></div>
<div class="c y l" style="left:797px;top:723px;width:79px;height:26px;padding-left:2.5px"><span>Yes</span></div>
<div class="c y l" style="left:876px;top:723px;width:85px;height:26px;padding-left:4px"><span>Yes</span></div>
<div class="c w r" style="left:961px;top:723px;width:108px;height:26px;padding-left:4px"><span>9</span></div>
<div class="c y l" style="left:1069px;top:723px;width:122px;height:26px;padding-left:4px"><span>Yes</span></div>
<div class="c g l" style="left:1191px;top:723px;width:126px;height:26px;padding-left:4px"><span>gvCustomerList</span></div>
<div class="ri" style="top:723px;height:26px"></div>
<div class="c g l" style="left:32px;top:749px;width:213px;height:26px;padding-left:5.5px"><span>frmSALSMain</span></div>
<div class="c g l" style="left:245px;top:749px;width:138px;height:26px;padding-left:5px"><span>fldCustomerRegNo</span></div>
<div class="c w l" style="left:383px;top:749px;width:222px;height:26px;padding-left:5px"><span>CustomerRegNo</span></div>
<div class="c w r" style="left:605px;top:749px;width:79px;height:26px;padding-left:4px"><span>121</span></div>
<div class="c y l" style="left:684px;top:749px;width:113px;height:26px;padding-left:4px"><span>Yes</span></div>
<div class="c y l" style="left:797px;top:749px;width:79px;height:26px;padding-left:2.5px"><span>Yes</span></div>
<div class="c y l" style="left:876px;top:749px;width:85px;height:26px;padding-left:4px"><span>Yes</span></div>
<div class="c w r" style="left:961px;top:749px;width:108px;height:26px;padding-left:4px"><span>10</span></div>
<div class="c y l" style="left:1069px;top:749px;width:122px;height:26px;padding-left:4px"><span>Yes</span></div>
<div class="c g l" style="left:1191px;top:749px;width:126px;height:26px;padding-left:4px"><span>gvCustomerList</span></div>
<div class="ri" style="top:749px;height:26px"></div>
<div class="c g l" style="left:32px;top:775px;width:213px;height:26px;padding-left:5.5px"><span>frmSALSMain</span></div>
<div class="c g l" style="left:245px;top:775px;width:138px;height:26px;padding-left:5px"><span>fldTaxRate</span></div>
<div class="c w l" style="left:383px;top:775px;width:222px;height:26px;padding-left:5px"><span>TaxRate</span></div>
<div class="c w r" style="left:605px;top:775px;width:79px;height:26px;padding-left:4px"><span>75</span></div>
<div class="c y l" style="left:684px;top:775px;width:113px;height:26px;padding-left:4px"><span>Yes</span></div>
<div class="c y l" style="left:797px;top:775px;width:79px;height:26px;padding-left:2.5px"><span>Yes</span></div>
<div class="c y l" style="left:876px;top:775px;width:85px;height:26px;padding-left:4px"><span>Yes</span></div>
<div class="c w r" style="left:961px;top:775px;width:108px;height:26px;padding-left:4px"><span>11</span></div>
<div class="c y l" style="left:1069px;top:775px;width:122px;height:26px;padding-left:4px"><span>Yes</span></div>
<div class="c g l" style="left:1191px;top:775px;width:126px;height:26px;padding-left:4px"><span>gvCustomerList</span></div>
<div class="ri" style="top:775px;height:26px"></div>
<div class="c g l" style="left:32px;top:801px;width:213px;height:26px;padding-left:5.5px"><span>frmSALSMain</span></div>
<div class="c g l" style="left:245px;top:801px;width:138px;height:26px;padding-left:5px"><span>fldCurrency</span></div>
<div class="c w l" style="left:383px;top:801px;width:222px;height:26px;padding-left:5px"><span>Currency</span></div>
<div class="c w r" style="left:605px;top:801px;width:79px;height:26px;padding-left:4px"><span>102</span></div>
<div class="c y l" style="left:684px;top:801px;width:113px;height:26px;padding-left:4px"><span>Yes</span></div>
<div class="c y l" style="left:797px;top:801px;width:79px;height:26px;padding-left:2.5px"><span>Yes</span></div>
<div class="c y l" style="left:876px;top:801px;width:85px;height:26px;padding-left:4px"><span>Yes</span></div>
<div class="c w r" style="left:961px;top:801px;width:108px;height:26px;padding-left:4px"><span>12</span></div>
<div class="c y l" style="left:1069px;top:801px;width:122px;height:26px;padding-left:4px"><span>Yes</span></div>
<div class="c g l" style="left:1191px;top:801px;width:126px;height:26px;padding-left:4px"><span>gvCustomerList</span></div>
<div class="ri" style="top:801px;height:26px"></div>
<div class="c g l" style="left:32px;top:827px;width:213px;height:27px;padding-left:5.5px"><span>frmSALSMain</span></div>
<div class="c g l" style="left:245px;top:827px;width:138px;height:27px;padding-left:5px"><span>fldIsDebtor</span></div>
<div class="c w l" style="left:383px;top:827px;width:222px;height:27px;padding-left:5px"><span>IsDebtor</span></div>
<div class="c w r" style="left:605px;top:827px;width:79px;height:27px;padding-left:4px"><span>75</span></div>
<div class="c y l" style="left:684px;top:827px;width:113px;height:27px;padding-left:4px"><span>Yes</span></div>
<div class="c y l" style="left:797px;top:827px;width:79px;height:27px;padding-left:2.5px"><span>Yes</span></div>
<div class="c y l" style="left:876px;top:827px;width:85px;height:27px;padding-left:4px"><span>Yes</span></div>
<div class="c w r" style="left:961px;top:827px;width:108px;height:27px;padding-left:4px"><span>13</span></div>
<div class="c y l" style="left:1069px;top:827px;width:122px;height:27px;padding-left:4px"><span>Yes</span></div>
<div class="c g l" style="left:1191px;top:827px;width:126px;height:27px;padding-left:4px"><span>gvCustomerList</span></div>
<div class="ri" style="top:827px;height:27px"></div>
<div class="c g l" style="left:32px;top:854px;width:213px;height:26px;padding-left:5.5px"><span>frmSALSMain</span></div>
<div class="c g l" style="left:245px;top:854px;width:138px;height:26px;padding-left:5px"><span>fldAccountCode</span></div>
<div class="c w l" style="left:383px;top:854px;width:222px;height:26px;padding-left:5px"><span>AccountCode</span></div>
<div class="c w r" style="left:605px;top:854px;width:79px;height:26px;padding-left:4px"><span>119</span></div>
<div class="c y l" style="left:684px;top:854px;width:113px;height:26px;padding-left:4px"><span>Yes</span></div>
<div class="c y l" style="left:797px;top:854px;width:79px;height:26px;padding-left:2.5px"><span>Yes</span></div>
<div class="c y l" style="left:876px;top:854px;width:85px;height:26px;padding-left:4px"><span>Yes</span></div>
<div class="c w r" style="left:961px;top:854px;width:108px;height:26px;padding-left:4px"><span>14</span></div>
<div class="c y l" style="left:1069px;top:854px;width:122px;height:26px;padding-left:4px"><span>Yes</span></div>
<div class="c g l" style="left:1191px;top:854px;width:126px;height:26px;padding-left:4px"><span>gvCustomerList</span></div>
<div class="ri" style="top:854px;height:26px"></div>
<div class="c g l" style="left:32px;top:880px;width:213px;height:26px;padding-left:5.5px"><span>frmSALSMain</span></div>
<div class="c g l" style="left:245px;top:880px;width:138px;height:26px;padding-left:5px"><span>fldIsConsolidated</span></div>
<div class="c w l" style="left:383px;top:880px;width:222px;height:26px;padding-left:5px"><span>IsConsolidated</span></div>
<div class="c w r" style="left:605px;top:880px;width:79px;height:26px;padding-left:4px"><span>127</span></div>
<div class="c y l" style="left:684px;top:880px;width:113px;height:26px;padding-left:4px"><span>Yes</span></div>
<div class="c y l" style="left:797px;top:880px;width:79px;height:26px;padding-left:2.5px"><span>Yes</span></div>
<div class="c y l" style="left:876px;top:880px;width:85px;height:26px;padding-left:4px"><span>Yes</span></div>
<div class="c w r" style="left:961px;top:880px;width:108px;height:26px;padding-left:4px"><span>15</span></div>
<div class="c y l" style="left:1069px;top:880px;width:122px;height:26px;padding-left:4px"><span>Yes</span></div>
<div class="c g l" style="left:1191px;top:880px;width:126px;height:26px;padding-left:4px"><span>gvCustomerList</span></div>
<div class="ri" style="top:880px;height:26px"></div>
<div class="c g l" style="left:32px;top:906px;width:213px;height:27px;padding-left:5.5px"><span>frmSALSMain</span></div>
<div class="c g l" style="left:245px;top:906px;width:138px;height:27px;padding-left:5px"><span>fldCreditCheck</span></div>
<div class="c w l" style="left:383px;top:906px;width:222px;height:27px;padding-left:5px"><span>CreditCheck</span></div>
<div class="c w r" style="left:605px;top:906px;width:79px;height:27px;padding-left:4px"><span>114</span></div>
<div class="c y l" style="left:684px;top:906px;width:113px;height:27px;padding-left:4px"><span>Yes</span></div>
<div class="c y l" style="left:797px;top:906px;width:79px;height:27px;padding-left:2.5px"><span>Yes</span></div>
<div class="c y l" style="left:876px;top:906px;width:85px;height:27px;padding-left:4px"><span>Yes</span></div>
<div class="c w r" style="left:961px;top:906px;width:108px;height:27px;padding-left:4px"><span>16</span></div>
<div class="c y l" style="left:1069px;top:906px;width:122px;height:27px;padding-left:4px"><span>Yes</span></div>
<div class="c g l" style="left:1191px;top:906px;width:126px;height:27px;padding-left:4px"><span>gvCustomerList</span></div>
<div class="ri" style="top:906px;height:27px"></div>
<div class="c g l" style="left:32px;top:933px;width:213px;height:26px;padding-left:5.5px"><span>frmSALSMain</span></div>
<div class="c g l" style="left:245px;top:933px;width:138px;height:26px;padding-left:5px"><span>fldCreditCheckDesc</span></div>
<div class="c w l" style="left:383px;top:933px;width:222px;height:26px;padding-left:5px"><span>CreditCheckDesc</span></div>
<div class="c w r" style="left:605px;top:933px;width:79px;height:26px;padding-left:4px"><span>124</span></div>
<div class="c y l" style="left:684px;top:933px;width:113px;height:26px;padding-left:4px"><span>Yes</span></div>
<div class="c y l" style="left:797px;top:933px;width:79px;height:26px;padding-left:2.5px"><span>Yes</span></div>
<div class="c y l" style="left:876px;top:933px;width:85px;height:26px;padding-left:4px"><span>Yes</span></div>
<div class="c w r" style="left:961px;top:933px;width:108px;height:26px;padding-left:4px"><span>17</span></div>
<div class="c y l" style="left:1069px;top:933px;width:122px;height:26px;padding-left:4px"><span>Yes</span></div>
<div class="c g l" style="left:1191px;top:933px;width:126px;height:26px;padding-left:4px"><span>gvCustomerList</span></div>
<div class="ri" style="top:933px;height:26px"></div>
<div class="c g l" style="left:32px;top:959px;width:213px;height:26px;padding-left:5.5px"><span></span></div>
<div class="c g l" style="left:245px;top:959px;width:138px;height:26px;padding-left:5px"><span></span></div>
<div class="c w l" style="left:383px;top:959px;width:222px;height:26px;padding-left:5px"><span></span></div>
<div class="c w r" style="left:605px;top:959px;width:79px;height:26px;padding-left:4px"><span></span></div>
<div class="c y l" style="left:684px;top:959px;width:113px;height:26px;padding-left:4px"><span></span></div>
<div class="c y l" style="left:797px;top:959px;width:79px;height:26px;padding-left:2.5px"><span></span></div>
<div class="c y l" style="left:876px;top:959px;width:85px;height:26px;padding-left:4px"><span></span></div>
<div class="c w r" style="left:961px;top:959px;width:108px;height:26px;padding-left:4px"><span></span></div>
<div class="c y l" style="left:1069px;top:959px;width:122px;height:26px;padding-left:4px"><span></span></div>
<div class="c g l" style="left:1191px;top:959px;width:126px;height:26px;padding-left:4px"><span></span></div>
<div class="ri" style="top:959px;height:26px"></div>

<!-- filter panel -->
<div id="fpanel"></div>
<svg class="a" style="left:10px;top:976px" width="12" height="10" viewBox="0 0 12 10"><path d="M1.5 1 L10.5 9 M10.5 1 L1.5 9" stroke="#1f1f28" stroke-width="2.4"/></svg>
<div class="a" style="left:31px;top:972px;width:16px;height:16px;border:1px solid #9fa0a8;background:linear-gradient(#e9eaee,#ffffff)"></div>
<svg class="a" style="left:33px;top:970px" width="16" height="18" viewBox="0 0 16 18"><path d="M1.5 9.5 L5.5 16 L14.5 1" fill="none" stroke="#1f1f28" stroke-width="1.8"/></svg>
<div class="t" style="left:51.00px;top:972px;font-size:14px;letter-spacing:-0.191px">Contains([Description], 'sales - customers - list')</div>
<div class="a" style="left:347px;top:978px;width:0;height:0;border-left:4.5px solid transparent;border-right:4.5px solid transparent;border-top:5px solid #2a2a36"></div>
<div class="t" style="left:1852.80px;top:973px;font-size:14px;letter-spacing:-0.192px">Edit Filter</div>
<!-- status bar -->
<div id="status"></div>
<div class="t" style="left:9.00px;top:1006px;font-size:14px;letter-spacing:-0.431px">Open Windows</div>
<div class="a" style="left:104px;top:1011px;width:0;height:0;border-left:4px solid transparent;border-right:4px solid transparent;border-top:5px solid #2a2a36"></div>
<div class="a" style="left:1770px;top:1003px;width:1px;height:25px;background:#b5b6bd"></div>
<div class="a" style="left:1784px;top:1000px;width:124px;height:26px;background:#fff;border:1px solid #d2d3d8"></div>
<div class="t" style="left:1788.60px;top:1006px;font-size:14px;letter-spacing:-0.181px">08 Nov 2022</div>
<div class="a" style="left:1894px;top:1006px;width:0;height:0;border-left:4.5px solid transparent;border-right:4.5px solid transparent;border-bottom:5px solid #1f1f28"></div>
<div class="a" style="left:1894px;top:1018px;width:0;height:0;border-left:4.5px solid transparent;border-right:4.5px solid transparent;border-top:5px solid #1f1f28"></div>
<!-- annotation overlay -->
<svg class="a" style="left:0;top:0;pointer-events:none" width="1920" height="1030" viewBox="0 0 1920 1030">
<g fill="#4167dc" stroke="#4167dc">
<circle cx="785" cy="267" r="14" stroke="none"/>
<line x1="772" y1="271" x2="731" y2="316" stroke-width="2.2"/>
<polygon points="724,325 730,310 738,316" stroke="none"/>
<line x1="799" y1="270" x2="826" y2="318" stroke-width="2.2"/>
<polygon points="832,328 821,318 829,313" stroke="none"/>
<rect x="681.5" y="328.5" width="193" height="25" fill="none" stroke-width="3"/>
</g>
</svg>

</body></html>
